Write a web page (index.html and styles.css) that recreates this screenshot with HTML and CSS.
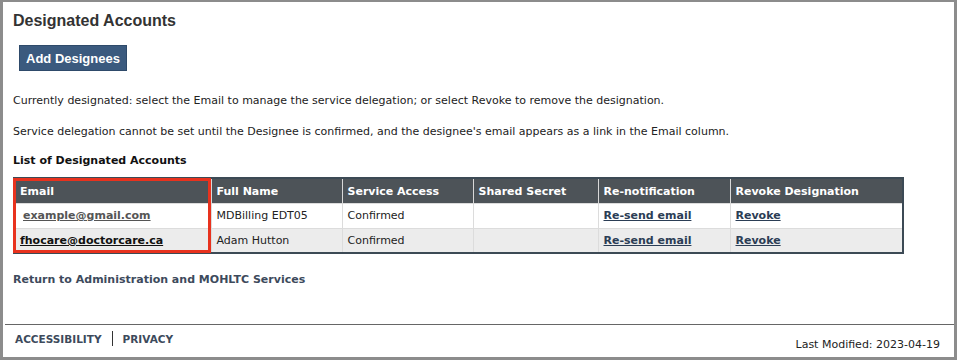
FILE: index.html
```html
<!DOCTYPE html>
<html lang="en">
<head>
    <meta charset="UTF-8">
    <title>Designated Accounts</title>
    <link rel="stylesheet" href="styles.css">
</head>
<body>
    <div class="frame">
        <div class="content">
            <h1>Designated Accounts</h1>
            <button class="add-btn" type="button">Add Designees</button>

            <p>Currently designated: select the Email to manage the service delegation; or select Revoke to remove the designation.</p>
            <p>Service delegation cannot be set until the Designee is confirmed, and the designee's email appears as a link in the Email column.</p>

            <h2>List of Designated Accounts</h2>

            <div class="table-wrap">
                <table>
                    <thead>
                        <tr>
                            <th class="col-email">Email</th>
                            <th class="col-name">Full Name</th>
                            <th class="col-access">Service Access</th>
                            <th class="col-secret">Shared Secret</th>
                            <th class="col-renotify">Re-notification</th>
                            <th>Revoke Designation</th>
                        </tr>
                    </thead>
                    <tbody>
                        <tr>
                            <td><a href="#" class="email visited">example@gmail.com</a></td>
                            <td>MDBilling EDT05</td>
                            <td>Confirmed</td>
                            <td></td>
                            <td><a href="#">Re-send email</a></td>
                            <td><a href="#">Revoke</a></td>
                        </tr>
                        <tr class="alt">
                            <td><a href="#" class="email">fhocare@doctorcare.ca</a></td>
                            <td>Adam Hutton</td>
                            <td>Confirmed</td>
                            <td></td>
                            <td><a href="#">Re-send email</a></td>
                            <td><a href="#">Revoke</a></td>
                        </tr>
                    </tbody>
                </table>
                <!-- annotation box around the Email column -->
                <div class="highlight"></div>
            </div>

            <a href="#" class="return-link">Return to Administration and MOHLTC Services</a>
        </div>

        <footer>
            <div class="footer-links">
                <a href="#">Accessibility</a>
                <span class="sep"></span>
                <a href="#">Privacy</a>
            </div>
            <div class="modified">Last Modified: 2023-04-19</div>
        </footer>
    </div>
</body>
</html>
```

FILE: styles.css
```css
* {
    box-sizing: border-box;
}

body {
    margin: 0;
    font-family: "DejaVu Sans", Verdana, sans-serif;
    font-size: 11px;
    color: #222;
    background: #fff;
}

.frame {
    width: 957px;
    height: 360px;
    border-top: 2px solid #8c8c8c;
    border-left: 3px solid #8c8c8c;
    border-right: 3px solid #8c8c8c;
    border-bottom: 3px solid #8c8c8c;
    display: flex;
    flex-direction: column;
}

.content {
    padding: 0 0 0 10px;
    flex: 1;
}

h1 {
    font-family: "Liberation Sans", Arial, sans-serif;
    font-size: 16px;
    font-weight: bold;
    color: #333;
    margin: 10px 0 0 0;
    line-height: 18px;
}

.add-btn {
    margin: 15px 0 0 6px;
    height: 26px;
    padding: 0 6px;
    background: #3b5a7e;
    color: #fff;
    border: 1px solid #2e4a6a;
    font-family: "Liberation Sans", Arial, sans-serif;
    font-size: 13px;
    font-weight: bold;
    cursor: pointer;
}

p {
    margin: 22px 0 0 0;
    line-height: 16px;
    font-size: 11px;
}

p + p {
    margin-top: 15px;
}

h2 {
    font-size: 11px;
    font-weight: bold;
    margin: 13px 0 0 0;
    line-height: 16px;
    color: #111;
}

.table-wrap {
    position: relative;
    width: 891px;
    margin-top: 8px;
}

table {
    width: 100%;
    border-collapse: collapse;
    border: 2px solid #3c4a55;
    font-size: 11px;
}

th {
    background: #4d5358;
    color: #fff;
    text-align: left;
    font-weight: bold;
    height: 25px;
    padding: 1px 5px 0;
    border-left: 1px solid #d8d8d8;
}

th:first-child {
    border-left: none;
}

td {
    height: 25px;
    padding: 0 5px;
    border-left: 1px solid #dcdcdc;
    border-top: 1px solid #dcdcdc;
}

.col-email { width: 197px; }
.col-name { width: 131px; }
.col-access { width: 131px; }
.col-secret { width: 125px; }
.col-renotify { width: 132px; }

tr.alt td {
    background: #ececec;
}

td a {
    color: #2b3d55;
    font-weight: bold;
    text-decoration: underline;
}

a.email {
    color: #111;
}

a.email.visited {
    color: #555;
    margin-left: 3px;
}

.highlight {
    position: absolute;
    left: 0;
    top: 1px;
    width: 198px;
    height: 75px;
    border: 3px solid #e8321e;
    pointer-events: none;
}

.return-link {
    display: inline-block;
    margin-top: 19px;
    font-weight: bold;
    font-size: 11px;
    color: #3d4a5c;
    text-decoration: none;
}

footer {
    margin-left: 2px;
    border-top: 1px solid #666;
    height: 33px;
    display: flex;
    justify-content: space-between;
    align-items: flex-end;
    padding: 0 14px 6px 10px;
}

.footer-links {
    display: flex;
    align-items: center;
    align-self: flex-start;
    margin-top: 6px;
}

.footer-links a {
    font-size: 10.5px;
    font-weight: bold;
    text-transform: uppercase;
    color: #3d4a5c;
    text-decoration: none;
}

.sep {
    width: 1px;
    height: 15px;
    background: #333;
    margin: 0 10px;
}

.modified {
    font-size: 11px;
    color: #222;
}
```
